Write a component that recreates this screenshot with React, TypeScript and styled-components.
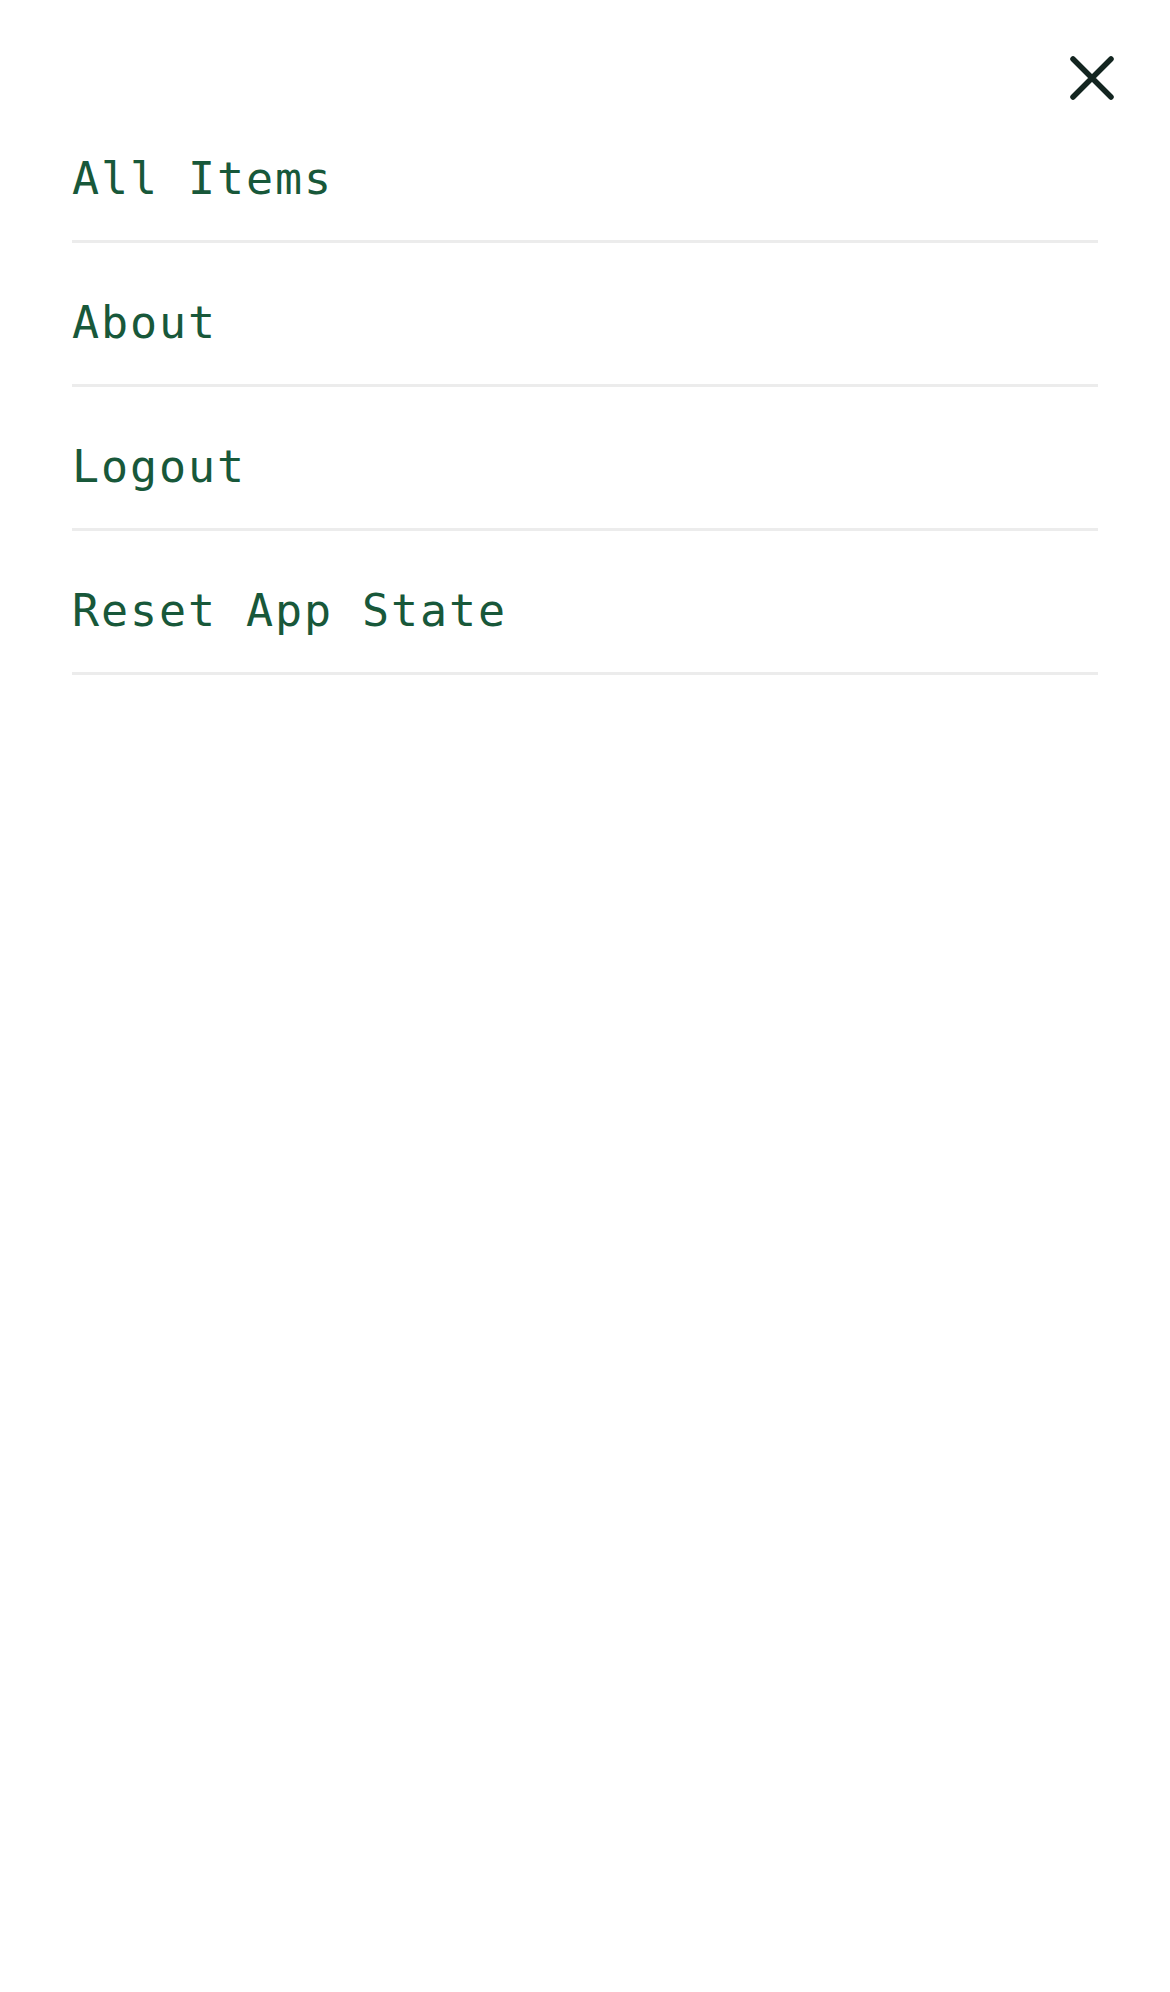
import React from "react";
import styled, { createGlobalStyle } from "styled-components";

const GlobalStyle = createGlobalStyle`
  html, body {
    margin: 0;
    padding: 0;
    background: #ffffff;
  }
  * { box-sizing: border-box; }
`;

const Page = styled.div`
  width: 100%;
  min-height: 1992px;
  background: #ffffff;
  display: flex;
  flex-direction: column;
`;

const Header = styled.header`
  height: 99px;
  display: flex;
  justify-content: flex-end;
  align-items: flex-start;
  padding: 56px 56px 0 0;
`;

const CloseButton = styled.button`
  width: 44px;
  height: 44px;
  padding: 0;
  margin: 0;
  border: none;
  background: transparent;
  cursor: pointer;
  display: flex;
  color: #132520;
`;

const Menu = styled.nav`
  display: flex;
  flex-direction: column;
  padding: 0 72px;
`;

const MenuItem = styled.a`
  display: block;
  padding: 56px 0 37px;
  border-bottom: 3px solid #ececec;
  font-family: "DejaVu Sans Mono", "Liberation Mono", monospace;
  font-size: 45px;
  line-height: 48px;
  letter-spacing: 1.9px;
  color: #18583a;
  text-decoration: none;
  white-space: nowrap;
`;

const items = ["All Items", "About", "Logout", "Reset App State"];

export default function App() {
  return (
    <>
      <GlobalStyle />
      <Page>
        <Header>
          <CloseButton aria-label="Close menu">
            <svg width="44" height="44" viewBox="0 0 44 44" fill="none">
              <path
                d="M3 3 L41 41 M41 3 L3 41"
                stroke="currentColor"
                strokeWidth="5.5"
                strokeLinecap="round"
              />
            </svg>
          </CloseButton>
        </Header>
        <Menu>
          {items.map((label) => (
            <MenuItem key={label} href="#">
              {label}
            </MenuItem>
          ))}
        </Menu>
      </Page>
    </>
  );
}
